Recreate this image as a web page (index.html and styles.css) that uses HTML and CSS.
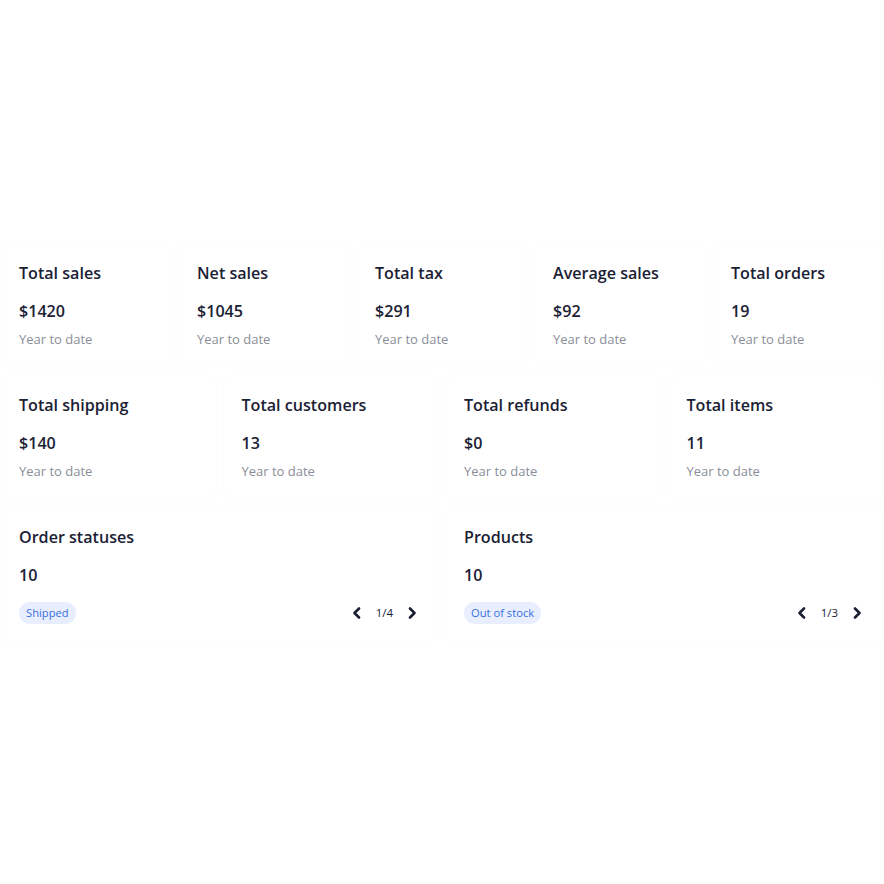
FILE: index.html
```html
<!DOCTYPE html>
<html lang="en">
<head>
<meta charset="utf-8">
<title>Stats</title>
<link rel="stylesheet" href="styles.css">
</head>
<body>
<main class="dash">
  <section class="row row-5">
    <div class="card"><h3 class="title">Total sales</h3><div class="value">$1420</div><div class="sub">Year to date</div></div>
    <div class="card"><h3 class="title">Net sales</h3><div class="value">$1045</div><div class="sub">Year to date</div></div>
    <div class="card"><h3 class="title">Total tax</h3><div class="value">$291</div><div class="sub">Year to date</div></div>
    <div class="card"><h3 class="title">Average sales</h3><div class="value">$92</div><div class="sub">Year to date</div></div>
    <div class="card"><h3 class="title">Total orders</h3><div class="value">19</div><div class="sub">Year to date</div></div>
  </section>
  <section class="row row-4">
    <div class="card"><h3 class="title">Total shipping</h3><div class="value">$140</div><div class="sub">Year to date</div></div>
    <div class="card"><h3 class="title">Total customers</h3><div class="value">13</div><div class="sub">Year to date</div></div>
    <div class="card"><h3 class="title">Total refunds</h3><div class="value">$0</div><div class="sub">Year to date</div></div>
    <div class="card"><h3 class="title">Total items</h3><div class="value">11</div><div class="sub">Year to date</div></div>
  </section>
  <section class="row row-2">
    <div class="card">
      <h3 class="title">Order statuses</h3>
      <div class="value">10</div>
      <div class="foot">
        <span class="badge">Shipped</span>
        <div class="pager">
          <svg class="chev" viewBox="0 0 10 12" width="10" height="12"><path d="M7 1.5 2.5 6 7 10.5" fill="none" stroke="currentColor" stroke-width="2.6" stroke-linecap="round" stroke-linejoin="round"/></svg>
          <span class="page">1/4</span>
          <svg class="chev" viewBox="0 0 10 12" width="10" height="12"><path d="M3 1.5 7.5 6 3 10.5" fill="none" stroke="currentColor" stroke-width="2.6" stroke-linecap="round" stroke-linejoin="round"/></svg>
        </div>
      </div>
    </div>
    <div class="card">
      <h3 class="title">Products</h3>
      <div class="value">10</div>
      <div class="foot">
        <span class="badge">Out of stock</span>
        <div class="pager">
          <svg class="chev" viewBox="0 0 10 12" width="10" height="12"><path d="M7 1.5 2.5 6 7 10.5" fill="none" stroke="currentColor" stroke-width="2.6" stroke-linecap="round" stroke-linejoin="round"/></svg>
          <span class="page">1/3</span>
          <svg class="chev" viewBox="0 0 10 12" width="10" height="12"><path d="M3 1.5 7.5 6 3 10.5" fill="none" stroke="currentColor" stroke-width="2.6" stroke-linecap="round" stroke-linejoin="round"/></svg>
        </div>
      </div>
    </div>
  </section>
</main>
</body>
</html>
```
FILE: styles.css
```css
* { box-sizing: border-box; }
html, body { margin: 0; padding: 0; background: #fff; }
body {
  font-family: "Open Sans", "Noto Sans", sans-serif;
  color: #1b2134;
  min-height: 100vh;
  display: flex;
  flex-direction: column;
  justify-content: center;
}
.dash {
  display: flex;
  flex-direction: column;
  gap: 8px;
  width: 100%;
}
.row { display: grid; column-gap: 6px; }
.row-5 { grid-template-columns: repeat(5, 1fr); }
.row-4 { grid-template-columns: repeat(4, 1fr); }
.row-2 { grid-template-columns: repeat(2, 1fr); }
.card {
  background: #fff;
  border: 1px solid #fdfdfd;
  border-radius: 10px;
  padding: 17px 18px;
  min-width: 0;
}
.title {
  margin: 0;
  font-size: 16.1px;
  font-weight: 600;
  line-height: 24px;
  white-space: nowrap;
}
.value {
  margin-top: 14px;
  font-size: 16.1px;
  font-weight: 600;
  line-height: 24px;
}
.sub {
  margin-top: 6px;
  font-size: 13px;
  line-height: 20px;
  color: #8a8e98;
}
.foot {
  margin-top: 15px;
  display: flex;
  align-items: center;
  justify-content: space-between;
  height: 22px;
}
.badge {
  display: inline-block;
  background: #e8eefd;
  color: #3a6fe2;
  font-size: 11.2px;
  line-height: 22px;
  padding: 0 7px;
  border-radius: 11px;
}
.pager {
  display: flex;
  align-items: center;
  gap: 14px;
  color: #1b2134;
  margin-right: 3px;
}
.chev { display: block; }
.page { font-size: 11.5px; line-height: 16px; }
```
